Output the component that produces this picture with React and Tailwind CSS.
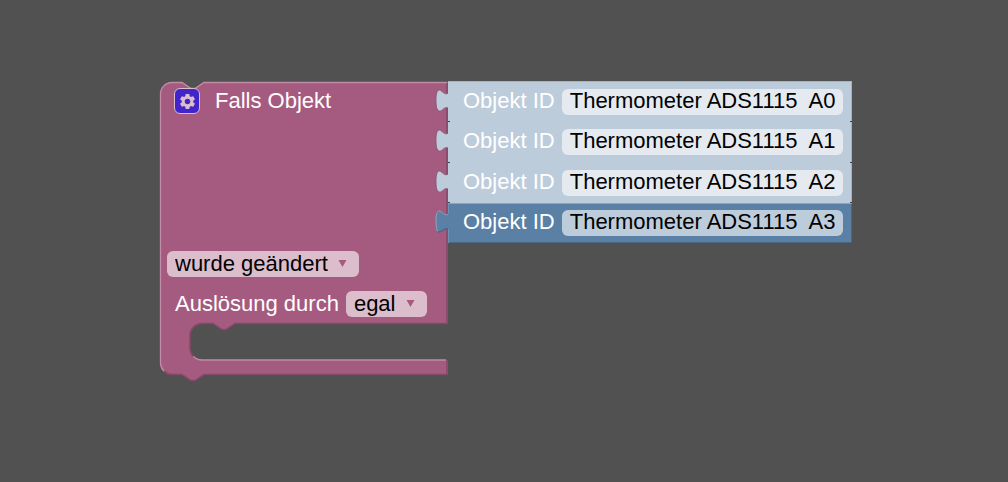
import React from 'react';
import clsx from 'clsx';
import { MdSettings } from 'react-icons/md';

const OBJECTS = [
  { id: 'a0', name: 'Thermometer ADS1115  A0', shadow: true },
  { id: 'a1', name: 'Thermometer ADS1115  A1', shadow: true },
  { id: 'a2', name: 'Thermometer ADS1115  A2', shadow: true },
  { id: 'a3', name: 'Thermometer ADS1115  A3', shadow: false },
];

// Outline of the C-shaped event block
function EventBlockShape() {
  return (
    <svg
      className="absolute left-0 top-0 overflow-visible pointer-events-none"
      width="288"
      height="300"
      viewBox="0 0 288 300"
      fill="none"
      aria-hidden="true"
    >
      <path
        d="M0 12A12 12 0 0 1 12 0H22L31 6H35L44 0H288V242H75L66 248H62L53 242H42A12 12 0 0 0 30 254V266A12 12 0 0 0 42 278H288V293H44L35 299H31L22 293H12A12 12 0 0 1 0 281Z"
        fill="#a55b80"
      />
      <path
        d="M287 1V241.5H75L66 247.5H62L53 241.5H42A12 12 0 0 0 30 254V266A12 12 0 0 0 33 274M287 278V292.5H44L35 298.5H31L22 292.5H12A12 12 0 0 1 4 289"
        stroke="#844966"
        strokeWidth="1.5"
      />
      <path
        d="M4 289A12 12 0 0 1 0.5 281V12A11.5 11.5 0 0 1 12 0.5H22L31 6.5H35L44 0.5H287M33.5 274.5A12 12 0 0 0 42 278H286"
        stroke="#c08ca6"
        strokeWidth="1.3"
      />
    </svg>
  );
}

function PuzzleTab({ shadow }) {
  return (
    <svg
      className="absolute right-full top-0 overflow-visible pointer-events-none"
      width="12"
      height="32"
      viewBox="0 0 12 32"
      fill="none"
      aria-hidden="true"
    >
      <path
        d="M13 11H12C9 14 5.5 8 3.5 8C1 8 0 12 0 18C0 25 1 29 4 29C7 29 8.5 24 12 26H13Z"
        fill={shadow ? '#bdccdb' : '#5b80a5'}
      />
      <path
        d="M12 11C9 14 5.5 8 3.5 8C1 8 0 12 0 18C0 23 0.5 27 2 28.5"
        stroke={shadow ? '#84506f' : '#8ca6c0'}
        strokeWidth={shadow ? 0.8 : 1}
      />
      <path
        d="M2 28.5C6 31 8 23.5 12 26"
        stroke={shadow ? '#8f5c7c' : '#496684'}
        strokeWidth={shadow ? 0.8 : 1.2}
      />
    </svg>
  );
}

// Dark specks where two neighbouring blocks meet
function SeamMarks() {
  return (
    <>
      <span className="absolute left-0 bottom-0 h-px w-0.5 bg-[#3a3f45]" />
      <span className="absolute right-0 bottom-0 h-px w-0.5 bg-[#3a3f45]" />
    </>
  );
}

function ObjectBlock({ id, name, shadow }) {
  return (
    <div
      className={clsx(
        'relative flex items-start gap-[7px] pt-[7px] pl-[15px] pr-[9px] leading-6',
        shadow
          ? 'bg-[#bdccdb] shadow-[inset_-1px_0_0_#a3b3c3]'
          : 'bg-[#5b80a5] shadow-[inset_0_1px_0_#8ca6c0,inset_1px_0_0_#6f90b0,inset_-1px_-1px_0_#496684]'
      )}
    >
      <PuzzleTab shadow={shadow} />
      {shadow && <SeamMarks />}
      <span id={`label-${id}`}>Objekt ID</span>
      <button
        type="button"
        aria-describedby={`label-${id}`}
        className={clsx(
          'flex items-start h-[26px] px-2 rounded-md text-black whitespace-pre',
          shadow ? 'bg-[#e5eaf1]' : 'bg-[#bdccdb]'
        )}
      >
        {name}
      </button>
    </div>
  );
}

function Dropdown({ label, options, ...props }) {
  return (
    <span className="relative inline-flex items-center">
      <select
        aria-label={label}
        className="appearance-none h-[26px] pl-2 pr-[31px] rounded-md bg-[#dbbdcc] text-black leading-[26px]"
        {...props}
      >
        {options.map((option) => (
          <option key={option}>{option}</option>
        ))}
      </select>
      <svg
        className="absolute right-3 top-[9px] pointer-events-none"
        width="9"
        height="7"
        viewBox="0 0 9 7"
        aria-hidden="true"
      >
        <path d="M0.5 0H8.5L4.5 7Z" fill="#a55b80" />
      </svg>
    </span>
  );
}

function MutatorButton() {
  return (
    <button
      type="button"
      aria-label="Objekte bearbeiten"
      className="flex size-[26px] items-center justify-center rounded-md border border-[#dbbdcc] bg-[#4224cc] text-[#dbbdcc]"
    >
      <MdSettings className="size-[19px]" aria-hidden="true" />
    </button>
  );
}

export default function App() {
  return (
    <main className="min-h-screen bg-[#515151] pl-40 pt-[82px] pb-24 text-[22px] leading-[26px] text-white whitespace-nowrap select-none font-['Liberation_Sans',Arial,sans-serif]">
      <div className="flex items-start">
        {/* Event block */}
        <section className="relative w-72 shrink-0" aria-label="Falls Objekt">
          <EventBlockShape />
          <div className="relative flex flex-col">
            <div className="flex h-[162px] items-start gap-[15px] pl-[14px] pt-[6px]">
              <MutatorButton />
              <span>Falls Objekt</span>
            </div>
            <div className="flex h-10 items-center pl-[7px]">
              <Dropdown label="Bedingung" options={['wurde geändert']} />
            </div>
            <div className="flex h-10 items-center gap-[7px] pl-[15px]">
              <label htmlFor="trigger">Auslösung durch</label>
              <Dropdown id="trigger" label="Auslösung durch" options={['egal']} />
            </div>
            <div className="h-[51px]" />
          </div>
        </section>

        {/* Connected object IDs */}
        <section
          className="relative grid shrink-0 grid-rows-[40px_41px_40px_40px] border-t border-[#a3b3c3] -mt-px"
          aria-label="Objekte"
        >
          {OBJECTS.map((object) => (
            <ObjectBlock key={object.id} {...object} />
          ))}
        </section>
      </div>
    </main>
  );
}
